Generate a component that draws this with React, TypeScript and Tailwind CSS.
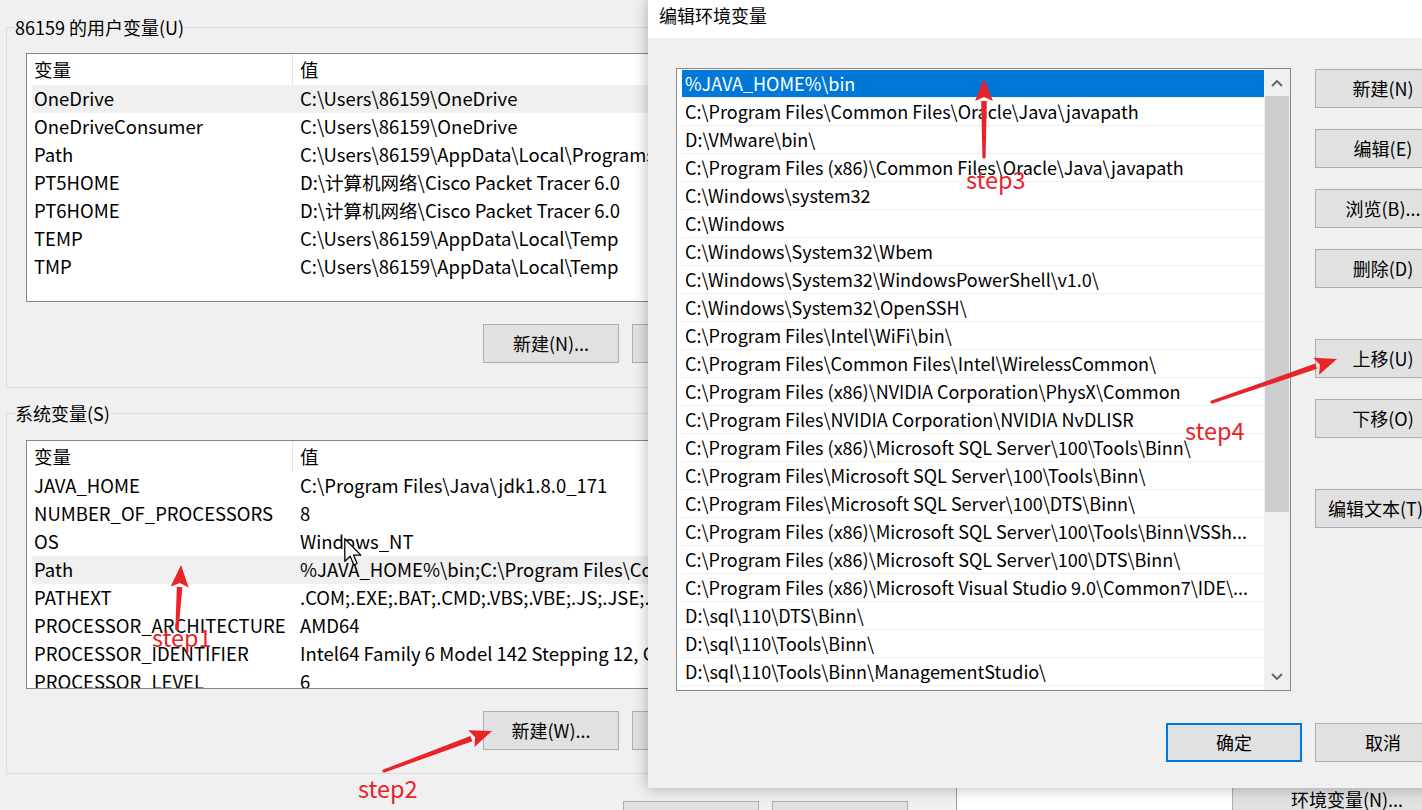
import React from 'react';

const userVars = [
  ['OneDrive', 'C:\\Users\\86159\\OneDrive'],
  ['OneDriveConsumer', 'C:\\Users\\86159\\OneDrive'],
  ['Path', 'C:\\Users\\86159\\AppData\\Local\\Programs\\Microsoft VS Code\\bin'],
  ['PT5HOME', 'D:\\计算机网络\\Cisco Packet Tracer 6.0'],
  ['PT6HOME', 'D:\\计算机网络\\Cisco Packet Tracer 6.0'],
  ['TEMP', 'C:\\Users\\86159\\AppData\\Local\\Temp'],
  ['TMP', 'C:\\Users\\86159\\AppData\\Local\\Temp'],
];

const sysVars = [
  ['JAVA_HOME', 'C:\\Program Files\\Java\\jdk1.8.0_171'],
  ['NUMBER_OF_PROCESSORS', '8'],
  ['OS', 'Windows_NT'],
  ['Path', '%JAVA_HOME%\\bin;C:\\Program Files\\Common Files\\Oracle\\Java\\javapath;D:\\VMware\\bin\\'],
  ['PATHEXT', '.COM;.EXE;.BAT;.CMD;.VBS;.VBE;.JS;.JSE;.WSF;.WSH;.MSC'],
  ['PROCESSOR_ARCHITECTURE', 'AMD64'],
  ['PROCESSOR_IDENTIFIER', 'Intel64 Family 6 Model 142 Stepping 12, GenuineIntel'],
  ['PROCESSOR_LEVEL', '6'],
];

const paths = [
  '%JAVA_HOME%\\bin',
  'C:\\Program Files\\Common Files\\Oracle\\Java\\javapath',
  'D:\\VMware\\bin\\',
  'C:\\Program Files (x86)\\Common Files\\Oracle\\Java\\javapath',
  'C:\\Windows\\system32',
  'C:\\Windows',
  'C:\\Windows\\System32\\Wbem',
  'C:\\Windows\\System32\\WindowsPowerShell\\v1.0\\',
  'C:\\Windows\\System32\\OpenSSH\\',
  'C:\\Program Files\\Intel\\WiFi\\bin\\',
  'C:\\Program Files\\Common Files\\Intel\\WirelessCommon\\',
  'C:\\Program Files (x86)\\NVIDIA Corporation\\PhysX\\Common',
  'C:\\Program Files\\NVIDIA Corporation\\NVIDIA NvDLISR',
  'C:\\Program Files (x86)\\Microsoft SQL Server\\100\\Tools\\Binn\\',
  'C:\\Program Files\\Microsoft SQL Server\\100\\Tools\\Binn\\',
  'C:\\Program Files\\Microsoft SQL Server\\100\\DTS\\Binn\\',
  'C:\\Program Files (x86)\\Microsoft SQL Server\\100\\Tools\\Binn\\VSSh...',
  'C:\\Program Files (x86)\\Microsoft SQL Server\\100\\DTS\\Binn\\',
  'C:\\Program Files (x86)\\Microsoft Visual Studio 9.0\\Common7\\IDE\\...',
  'D:\\sql\\110\\DTS\\Binn\\',
  'D:\\sql\\110\\Tools\\Binn\\',
  'D:\\sql\\110\\Tools\\Binn\\ManagementStudio\\',
  'D:\\sql\\110\\Tools\\Binn\\ManagementStudio\\Common7\\',
];

function Btn({ children, primary = false, className = '' }: { children: React.ReactNode; primary?: boolean; className?: string }) {
  return (
    <div
      className={`flex h-[39px] w-[136px] shrink-0 items-center justify-center whitespace-nowrap bg-[#e1e1e1] text-[18px] text-black ${
        primary ? 'border-2 border-[#0078d7]' : 'border border-[#adadad]'
      } ${className}`}
    >
      {children}
    </div>
  );
}

function VarList({ rows, hl }: { rows: string[][]; hl: number }) {
  return (
    <div className="ml-[19px] h-[249px] w-[900px] overflow-hidden border border-[#828790] bg-white text-[18.5px] text-black">
      <div className="flex h-[31px]">
        <div className="flex w-[266px] shrink-0 items-center border-r border-[#e5e5e5] pl-[7px]">变量</div>
        <div className="flex items-center pl-[7px]">值</div>
      </div>
      {rows.map(([k, v], i) => (
        <div key={k} className={`ml-[5px] flex h-[28px] items-center whitespace-nowrap ${i === hl ? 'bg-[#f0f0f0]' : ''}`}>
          <div className="w-[261px] shrink-0 pl-[2px]">{k}</div>
          <div className="pl-[7px]">{v}</div>
        </div>
      ))}
    </div>
  );
}

function Arrow({ x1, y1, x2, y2 }: { x1: number; y1: number; x2: number; y2: number }) {
  const dx = x2 - x1;
  const dy = y2 - y1;
  const len = Math.hypot(dx, dy);
  const ux = dx / len;
  const uy = dy / len;
  const px = -uy;
  const py = ux;
  const head = 22;
  const hw = 9;
  const bx = x2 - ux * head;
  const by = y2 - uy * head;
  const shaft = [
    [x1 + px * 1.6, y1 + py * 1.6],
    [bx + px * 2.8, by + py * 2.8],
    [bx - px * 2.8, by - py * 2.8],
    [x1 - px * 1.6, y1 - py * 1.6],
  ];
  const tip = [
    [x2, y2],
    [bx + px * hw, by + py * hw],
    [bx + ux * 4, by + uy * 4],
    [bx - px * hw, by - py * hw],
  ];
  const pts = (a: number[][]) => a.map((p) => p.join(',')).join(' ');
  return (
    <g fill="#e8232a">
      <polygon points={pts(shaft)} />
      <circle cx={x1} cy={y1} r={1.6} />
      <polygon points={pts(tip)} />
    </g>
  );
}

function Chevron({ up }: { up: boolean }) {
  return (
    <svg width="12" height="8" viewBox="0 0 12 8">
      <polyline
        points={up ? '1,7 6,2 11,7' : '1,1 6,6 11,1'}
        fill="none"
        stroke="#606060"
        strokeWidth="1.8"
      />
    </svg>
  );
}

export default function App() {
  return (
    <div className="relative h-[810px] w-[1422px] overflow-hidden bg-white font-['Noto_Sans_CJK_SC','Microsoft_YaHei',sans-serif] text-black">
      {/* 系统属性 behind everything */}
      <div className="absolute left-[957px] top-[740px] h-[70px] w-[465px] bg-white pl-[275px] pt-[40px]">
        <div className="flex h-[39px] w-[230px] items-center justify-center whitespace-nowrap border border-[#adadad] bg-[#e1e1e1] text-[18px]">
          环境变量(N)...
        </div>
      </div>

      {/* 环境变量 window */}
      <div className="absolute left-0 top-0 h-[810px] w-[957px] border-r border-[#a0a0a0] bg-[#f0f0f0] pl-[6px] pt-[17px]">
        <fieldset className="w-[940px] border border-[#dcdcdc] pb-[24px]">
          <legend className="ml-[8px] text-[18px] leading-[20px]">86159 的用户变量(U)</legend>
          <div className="mt-[16px]">
            <VarList rows={userVars} hl={0} />
          </div>
          <div className="ml-[476px] mt-[22px] flex gap-[13px]">
            <Btn>新建(N)...</Btn>
            <Btn>编辑(E)...</Btn>
            <Btn>删除(D)</Btn>
          </div>
        </fieldset>

        <fieldset className="mt-[15px] w-[940px] border border-[#dcdcdc] pb-[23px]">
          <legend className="ml-[8px] text-[18px] leading-[20px]">系统变量(S)</legend>
          <div className="mt-[17px]">
            <VarList rows={sysVars} hl={3} />
          </div>
          <div className="ml-[476px] mt-[22px] flex gap-[13px]">
            <Btn>新建(W)...</Btn>
            <Btn>编辑(I)...</Btn>
            <Btn>删除(L)</Btn>
          </div>
        </fieldset>

        <div className="ml-[617px] mt-[27px] flex gap-[13px]">
          <Btn>确定</Btn>
          <Btn>取消</Btn>
        </div>
      </div>

      {/* 编辑环境变量 dialog */}
      <div className="absolute left-[648px] top-0 h-[788px] w-[820px] bg-[#f0f0f0] shadow-[0_0_14px_rgba(0,0,0,0.3)]">
        <div className="h-[38px] bg-white pl-[11px] pt-[4px] text-[18px] leading-[22px]">编辑环境变量</div>
        <div className="flex pl-[28px] pt-[30px]">
          <div className="flex h-[623px] w-[615px] shrink-0 overflow-hidden border border-[#828790] bg-white">
            <div className="flex-1 overflow-hidden pl-[5px] pt-[1px] text-[18px]">
              {paths.map((p, i) => (
                <div
                  key={p}
                  className={`flex h-[28px] items-center whitespace-nowrap border-b border-[#f0f0f0] pl-[3px] ${
                    i === 0 ? 'bg-[#0078d7] text-white' : ''
                  }`}
                >
                  {p}
                </div>
              ))}
            </div>
            <div className="flex w-[26px] flex-col bg-[#f0f0f0] pt-[1px]">
              <div className="flex h-[26px] items-center justify-center">
                <Chevron up />
              </div>
              <div className="mx-[1px] h-[416px] bg-[#cdcdcd]" />
              <div className="flex-1" />
              <div className="flex h-[26px] items-center justify-center">
                <Chevron up={false} />
              </div>
            </div>
          </div>
          <div className="ml-[24px] mt-[1px] flex flex-col">
            <Btn>新建(N)</Btn>
            <Btn className="mt-[21px]">编辑(E)</Btn>
            <Btn className="mt-[21px]">浏览(B)...</Btn>
            <Btn className="mt-[21px]">删除(D)</Btn>
            <Btn className="mt-[51px]">上移(U)</Btn>
            <Btn className="mt-[21px]">下移(O)</Btn>
            <Btn className="mt-[51px]">编辑文本(T)...</Btn>
          </div>
        </div>
        <div className="ml-[518px] mt-[32px] flex gap-[13px]">
          <Btn primary>确定</Btn>
          <Btn>取消</Btn>
        </div>
      </div>

      {/* mouse pointer */}
      <svg className="absolute left-[344px] top-[538px]" width="19" height="29" viewBox="0 0 13 20">
        <path d="M0.5 0.5 L0.5 16 L4.2 12.6 L6.8 18.6 L9 17.6 L6.5 11.8 L11.6 11.8 Z" fill="white" stroke="black" strokeWidth="0.9" strokeLinejoin="round" />
      </svg>

      {/* annotations */}
      <svg className="pointer-events-none absolute left-0 top-0" width="1422" height="810">
        <Arrow x1={177} y1={629} x2={181} y2={565} />
        <Arrow x1={384} y1={771} x2={492} y2={731} />
        <Arrow x1={984} y1={157} x2={984} y2={79} />
        <Arrow x1={1212} y1={402} x2={1337} y2={359} />
      </svg>
      <span className="absolute left-[152px] top-[622px] text-[23.5px] leading-[30px] text-[#e8232a]">step1</span>
      <span className="absolute left-[358px] top-[773px] text-[23.5px] leading-[30px] text-[#e8232a]">step2</span>
      <span className="absolute left-[966px] top-[164px] text-[23.5px] leading-[30px] text-[#e8232a]">step3</span>
      <span className="absolute left-[1185px] top-[415px] text-[23.5px] leading-[30px] text-[#e8232a]">step4</span>
    </div>
  );
}
